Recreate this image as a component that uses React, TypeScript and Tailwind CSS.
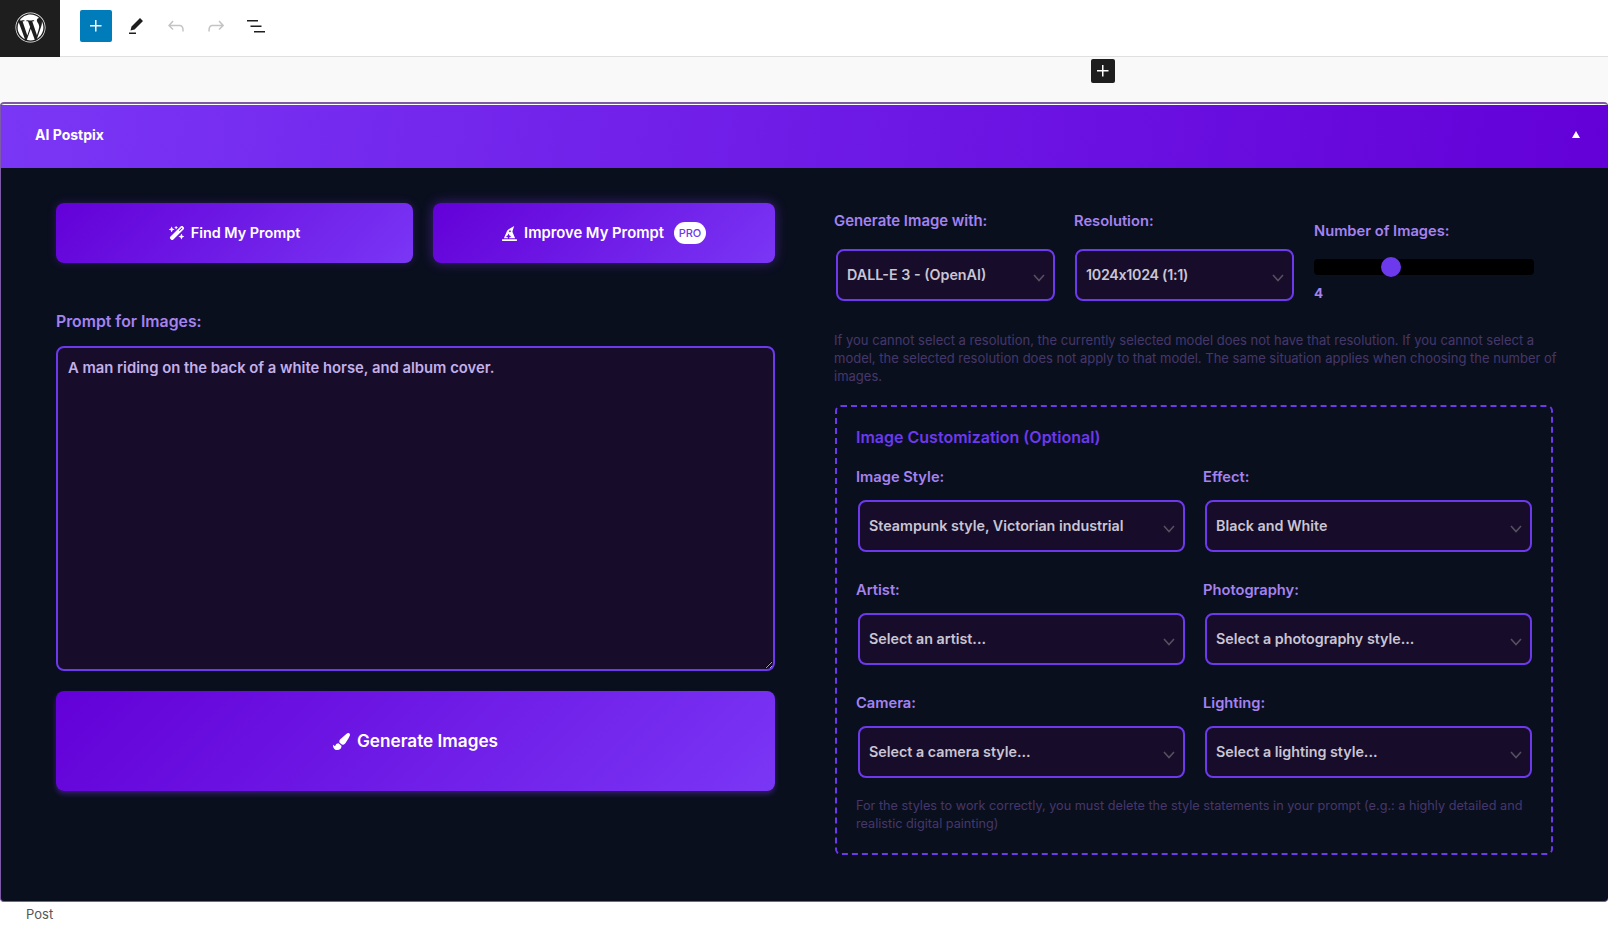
import React from 'react';
import { FaHatWizard, FaPaintBrush, FaWordpress } from 'react-icons/fa';
import { FaWandMagicSparkles } from 'react-icons/fa6';

const PURPLE_BTN = 'bg-[linear-gradient(135deg,#6300d8,#7a36f5)]';

function WpIcon({ d, className }: { d: string; className: string }) {
  return (
    <svg viewBox="0 0 24 24" width="24" height="24" className={className} fill="currentColor">
      <path d={d} />
    </svg>
  );
}

function Label({ children, className = '' }: { children: React.ReactNode; className?: string }) {
  return <label className={`block leading-[22px] font-semibold text-[#a482f0] ${className}`}>{children}</label>;
}

function Select({ value, className = '' }: { value: string; className?: string }) {
  return (
    <div className={`relative h-[52px] ${className}`}>
      <select
        value={value}
        onChange={() => {}}
        className="w-full h-full appearance-none rounded-[8px] border-2 border-[#6d39ed] bg-[#170c2a] pl-[9px] pr-8 text-[14.3px] font-semibold text-[#c9c5d3] outline-none"
      >
        <option>{value}</option>
      </select>
      <svg viewBox="0 0 12 8" className="absolute right-[10px] top-[25px] w-[12px] h-[8px] text-[#55505f] pointer-events-none" fill="none" stroke="currentColor" strokeWidth="1.6">
        <path d="M1 1l5 5.5L11 1" />
      </svg>
    </div>
  );
}

function Field({ label, value }: { label: string; value: string }) {
  return (
    <div>
      <Label className="mb-[12px] -ml-px text-[14.7px]">{label}</Label>
      <Select value={value} className="ml-[1px] mr-[-1px]" />
    </div>
  );
}

export default function App() {
  return (
    <div className="h-[925px] overflow-hidden bg-white flex flex-col font-['Inter','Liberation_Sans',sans-serif]">
      {/* editor toolbar */}
      <header className="h-[57px] shrink-0 flex items-start bg-white border-b border-[#e0e0e0]">
        <div className="w-[60px] h-[57px] pb-[2px] bg-[#1e1e1e] flex items-center justify-center text-white">
          <FaWordpress className="w-[31px] h-[31px]" />
        </div>
        <div className="flex items-center ml-[20px] mt-[10px] gap-[8px]">
          <button className="w-[32px] h-[32px] rounded-[2px] bg-[#007cba] text-white flex items-center justify-center">
            <WpIcon className="" d="M11 12.5V17.5H12.5V12.5H17.5V11H12.5V6H11V11H6V12.5H11Z" />
          </button>
          <button className="w-[32px] h-[32px] flex items-center justify-center text-[#1e1e1e]">
            <WpIcon className="" d="m19 7-3-3-8.5 8.5-1 4 4-1L19 7Zm-7 11.5H5V20h7v-1.5Z" />
          </button>
          <button className="w-[32px] h-[32px] flex items-center justify-center text-[#c4c4c4]">
            <WpIcon className="" d="M18.3 11.7c-.6-.6-1.4-.9-2.3-.9H6.7l2.9-3.3-1.1-1-4.5 5L8.5 16l1-1-2.7-2.7H16c.5 0 .9.2 1.3.5 1 1 1 3.4 1 4.5v.3h1.5v-.2c0-1.5 0-4.3-1.5-5.7z" />
          </button>
          <button className="w-[32px] h-[32px] flex items-center justify-center text-[#c4c4c4]">
            <WpIcon className="" d="M15.6 6.5l-1.1 1 2.9 3.3H8c-.9 0-1.7.3-2.3.9-1.4 1.5-1.4 4.2-1.4 5.6v.2h1.5v-.3c0-1.1 0-3.5 1-4.5.3-.3.7-.5 1.3-.5h9.2L14.5 15l1.1 1.1 4.6-4.6-4.6-5z" />
          </button>
          <button className="w-[32px] h-[32px] flex items-center justify-center text-[#1e1e1e]">
            <WpIcon className="" d="M3 6h11v1.5H3V6Zm3.5 5.5h11V13h-11v-1.5ZM21 17H10v1.5h11V17Z" />
          </button>
        </div>
      </header>

      {/* canvas gap with block inserter */}
      <div className="h-[45px] shrink-0 bg-[#f9f9f9] flex justify-start pl-[1091px] pt-[2px]">
        <button className="w-[24px] h-[24px] rounded-[2px] bg-[#1e1e1e] text-white flex items-center justify-center">
          <WpIcon className="" d="M11 12.5V17.5H12.5V12.5H17.5V11H12.5V6H11V11H6V12.5H11Z" />
        </button>
      </div>

      {/* meta box */}
      <section className="h-[800px] shrink-0 bg-[#0a0f1e] rounded-[4px] border-t-2 border-b border-l border-[#7d5aa6] flex flex-col overflow-hidden">
        <div className="h-[64px] shrink-0 pb-[4px] border-t border-white bg-[linear-gradient(100deg,#7a36f5,#6300d8)] flex items-center justify-between pl-[34px] pr-[28px]">
          <h2 className="text-[14px] font-bold text-white">AI Postpix</h2>
          <span className="w-0 h-0 border-x-[4px] border-x-transparent border-b-[7px] border-b-white" />
        </div>

        <div className="flex gap-[59px] pl-[55px] pt-[35px]">
          {/* left column */}
          <div className="w-[719px] shrink-0">
            <div className="flex gap-[20px]">
              <button className={`w-[357px] h-[60px] rounded-[8px] ${PURPLE_BTN} flex items-center justify-center gap-[6px] text-[14.4px] font-semibold text-white shadow-[0_0_8px_rgba(122,54,245,0.25)]`}>
                <FaWandMagicSparkles className="w-[16px] h-[16px]" />
                Find My Prompt
              </button>
              <button className={`flex-1 h-[60px] rounded-[8px] ${PURPLE_BTN} flex items-center justify-center gap-[7px] text-[14.8px] font-semibold text-white shadow-[0_0_12px_rgba(122,54,245,0.45)]`}>
                <FaHatWizard className="w-[15px] h-[15px]" />
                Improve My Prompt
                <span className="ml-[3px] w-[32px] h-[22px] rounded-full bg-white text-[#6d39ed] text-[11px] font-medium flex items-center justify-center">PRO</span>
              </button>
            </div>
            <Label className="mt-[48px] mb-[13px] text-[15.8px]">Prompt for Images:</Label>
            <textarea
              readOnly
              value="A man riding on the back of a white horse, and album cover."
              className="block w-full h-[325px] rounded-[8px] border-2 border-[#6d39ed] bg-[#170c2a] px-[10px] py-[9px] text-[14.8px] leading-[22px] font-semibold text-[#c3b0e8] outline-none"
            />
            <button className={`mt-[20px] w-full h-[100px] rounded-[8px] ${PURPLE_BTN} flex items-center justify-center gap-[7px] text-[17.2px] font-semibold text-white shadow-[0_3px_5px_rgba(122,54,245,0.35)]`}>
              <FaPaintBrush className="w-[17px] h-[17px]" />
              Generate Images
            </button>
          </div>

          {/* right column */}
          <div className="w-[719px] shrink-0">
            <div className="flex h-[115px]">
              <div className="w-[240px] shrink-0 pt-[7px]">
                <Label className="mb-[17px] text-[14.9px]">Generate Image with:</Label>
                <Select value="DALL-E 3 - (OpenAI)" className="ml-[2px] w-[219px]" />
              </div>
              <div className="w-[240px] shrink-0 pt-[7px]">
                <Label className="mb-[17px] text-[14.7px]">Resolution:</Label>
                <Select value="1024x1024 (1:1)" className="ml-[1px] w-[219px] tracking-[-0.3px] [font-feature-settings:'calt'_0]" />
              </div>
              <div className="flex-1 pt-[17px]">
                <Label className="mb-[17px] text-[14.7px]">Number of Images:</Label>
                <div className="relative w-[220px] h-[16px] rounded-[4px] bg-black">
                  <span className="absolute left-[67px] top-[-2px] w-[20px] h-[20px] rounded-full bg-[#6d39ed]" />
                </div>
                <p className="mt-[9px] text-[13.5px] leading-[18px] font-bold text-[#a482f0]">4</p>
              </div>
            </div>

            <p className="mt-[13px] w-[726px] text-[13px] leading-[18px] text-[#46376b]">
              If you cannot select a resolution, the currently selected model does not have that resolution. If you cannot select a model, the selected resolution does not apply to that model. The same situation applies when choosing the number of images.
            </p>

            <div className="mt-[20px] ml-[1px] h-[450px] rounded-[6px] border-2 border-dashed border-[#6d39ed] px-[20px] pt-[18px]">
              <h3 className="-ml-px text-[16px] leading-[24px] font-semibold text-[#6d39ed]">Image Customization (Optional)</h3>
              <div className="mt-[17px] grid grid-cols-2 gap-x-[20px] gap-y-[27px]">
                <Field label="Image Style:" value="Steampunk style, Victorian industrial" />
                <Field label="Effect:" value="Black and White" />
                <Field label="Artist:" value="Select an artist..." />
                <Field label="Photography:" value="Select a photography style..." />
                <Field label="Camera:" value="Select a camera style..." />
                <Field label="Lighting:" value="Select a lighting style..." />
              </div>
              <p className="mt-[19px] -ml-px text-[12.7px] leading-[18px] text-[#46376b]">
                For the styles to work correctly, you must delete the style statements in your prompt (e.g.: a highly detailed and realistic digital painting)
              </p>
            </div>
          </div>
        </div>
      </section>

      <footer className="flex-1 bg-white pl-[26px] pt-[3px] text-[13px] leading-[18px] text-[#555]">Post</footer>
    </div>
  );
}
